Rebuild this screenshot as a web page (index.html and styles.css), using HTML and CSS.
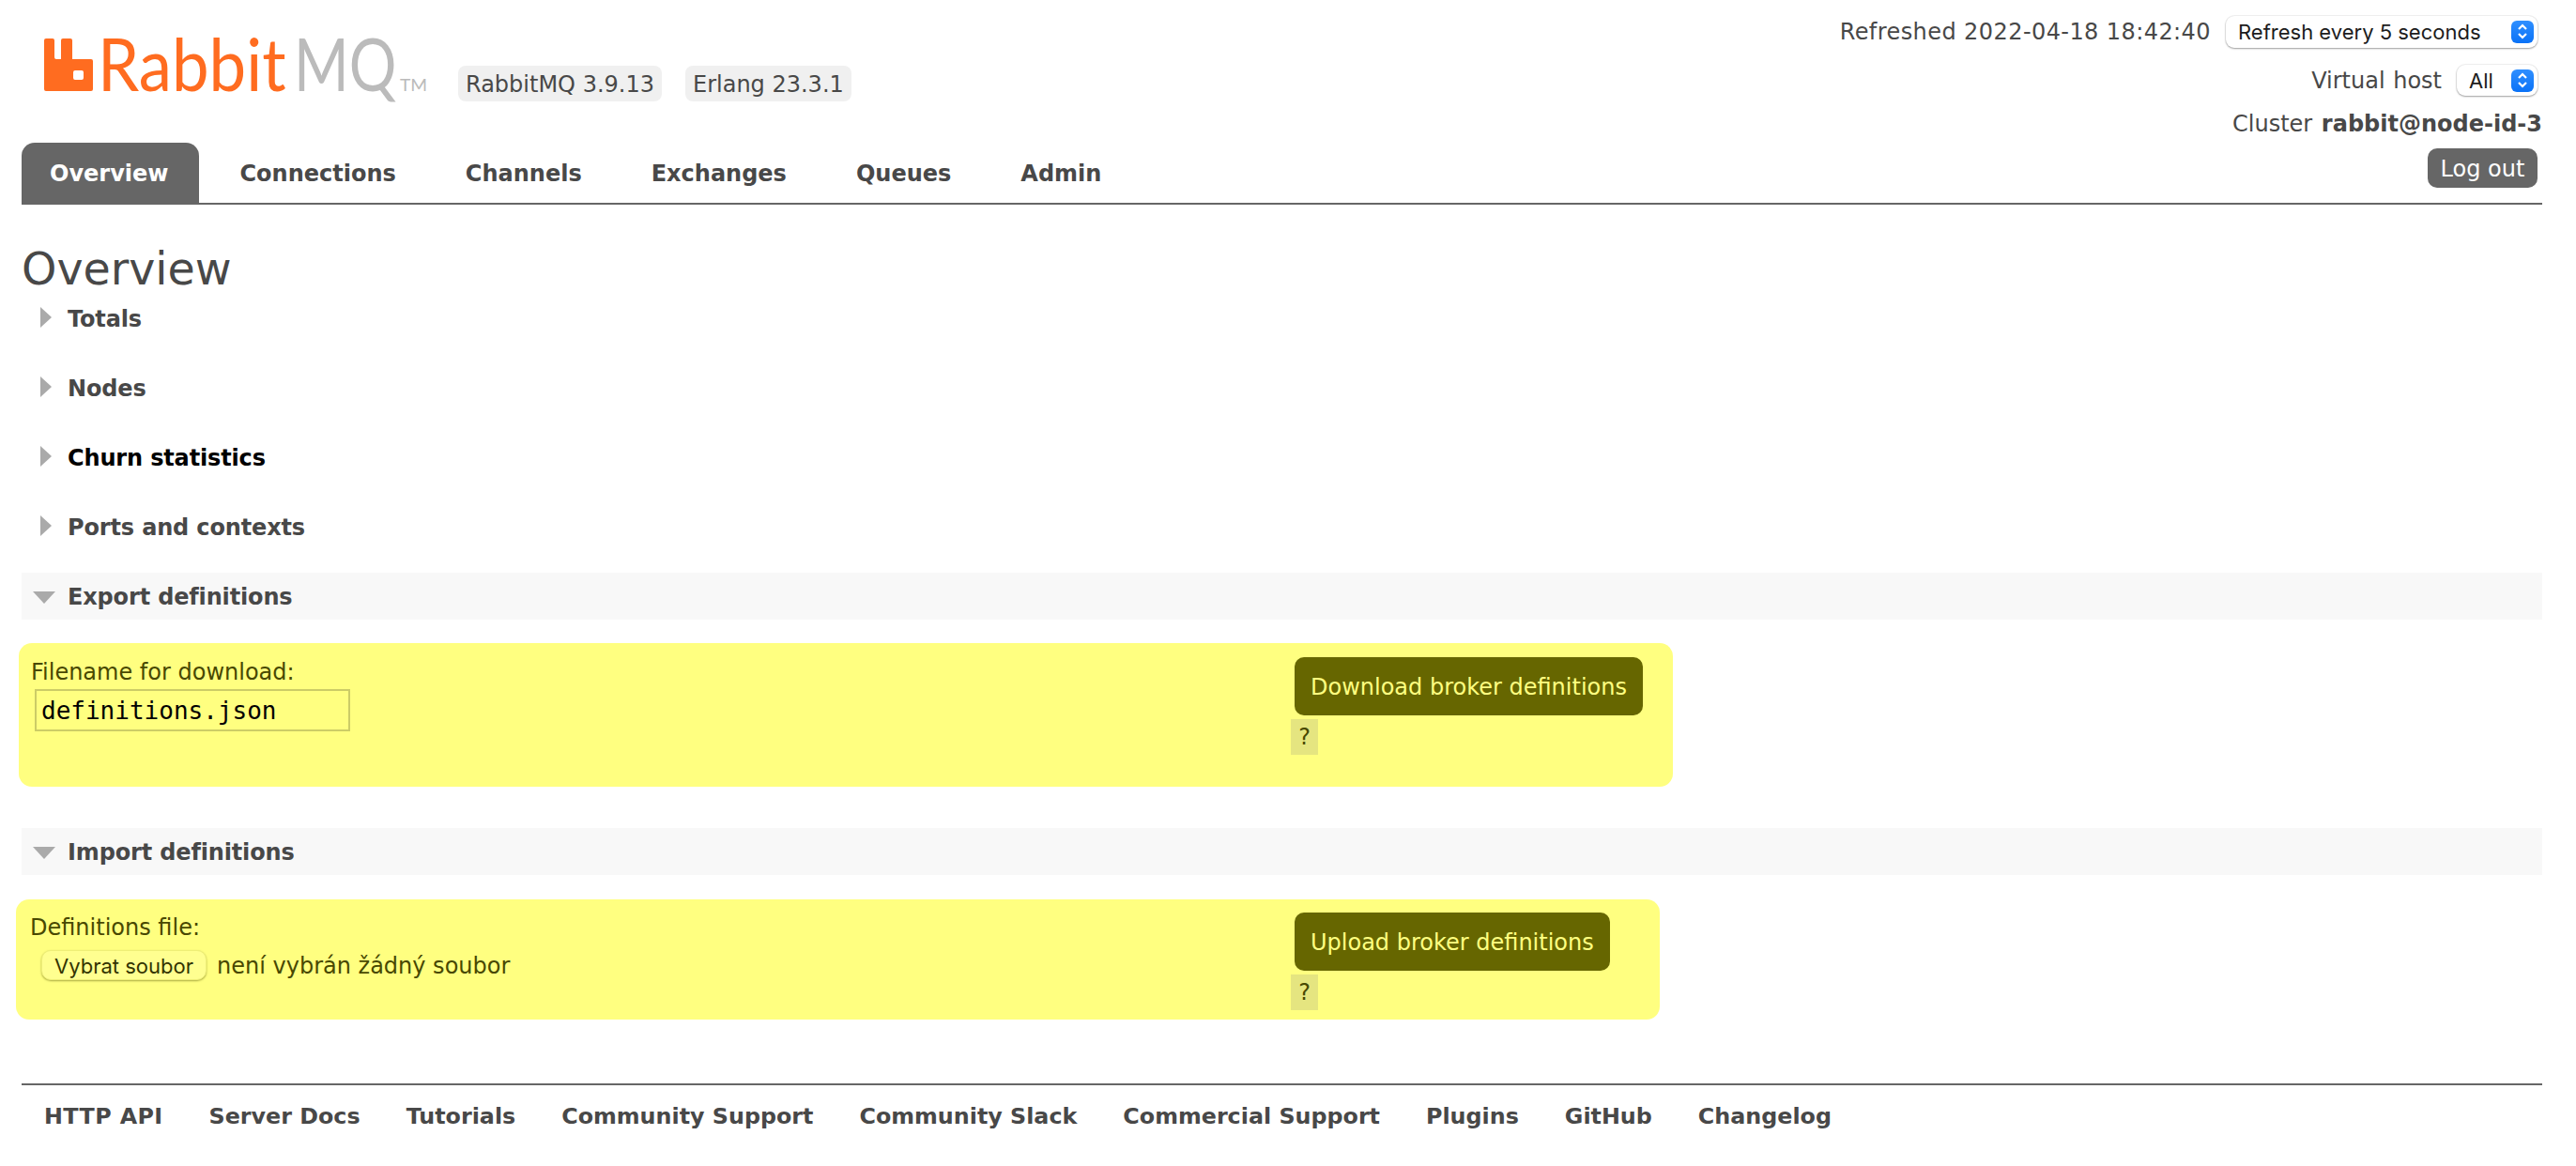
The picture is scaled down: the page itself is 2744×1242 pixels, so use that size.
FILE: index.html
```html
<!DOCTYPE html>
<html lang="en">
<head>
<meta charset="utf-8">
<title>RabbitMQ Management</title>
<link rel="stylesheet" href="styles.css">
</head>
<body>
<header class="header">
  <div class="brand-col">
    <div class="brand">
      <svg class="logo" width="410" height="110" viewBox="0 -30 410 110" aria-label="RabbitMQ">
        <path fill-rule="evenodd" fill="#ff6c20" d="M2 0H9a2 2 0 0 1 2 2V20a2 2 0 0 0 2 2H18V2a2 2 0 0 1 2-2H28a2 2 0 0 1 2 2V22H50a2 2 0 0 1 2 2V54a2 2 0 0 1-2 2H2a2 2 0 0 1-2-2V2a2 2 0 0 1 2-2ZM33 34a2 2 0 0 0-2 2v6a2 2 0 0 0 2 2h7a2 2 0 0 0 2-2v-6a2 2 0 0 0-2-2Z"/>
        <text class="logo-rabbit" transform="translate(57 55.5) scale(.907 1)">Rabbit</text>
        <text class="logo-mq" transform="translate(266 55.5) scale(.81 1)">MQ</text>
        <text class="logo-tm" transform="translate(379 56) scale(1.13 1)">TM</text>
      </svg>
      <span class="badge badge-rabbit">RabbitMQ 3.9.13</span>
      <span class="badge">Erlang 23.3.1</span>
    </div>
    <nav class="tabs">
      <a class="tab tab-active">Overview</a>
      <a class="tab">Connections</a>
      <a class="tab">Channels</a>
      <a class="tab">Exchanges</a>
      <a class="tab">Queues</a>
      <a class="tab">Admin</a>
    </nav>
  </div>
  <div class="status">
    <div class="status-row status-refresh">
      <span class="refreshed">Refreshed 2022-04-18 18:42:40</span>
      <div class="select select-wide">
        <span>Refresh every 5 seconds</span>
        <svg class="stepper" width="24" height="24" viewBox="0 0 24 24"><path d="M8 9l4-4 4 4M8 14l4 4 4-4" fill="none" stroke="#fff" stroke-width="2.2"/></svg>
      </div>
    </div>
    <div class="status-row status-vhost">
      <span class="vhost-label">Virtual host</span>
      <div class="select select-narrow">
        <span>All</span>
        <svg class="stepper" width="24" height="24" viewBox="0 0 24 24"><path d="M8 9l4-4 4 4M8 14l4 4 4-4" fill="none" stroke="#fff" stroke-width="2.2"/></svg>
      </div>
    </div>
    <div class="status-cluster">Cluster <b>rabbit@node-id-3</b></div>
    <button class="logout" type="button">Log out</button>
  </div>
</header>

<main class="main">
  <h1 class="title">Overview</h1>

  <h2 class="section"><svg class="arrow" width="24" height="24" viewBox="0 0 24 24"><path d="M8 1l12 11L8 23Z"/></svg>Totals</h2>
  <h2 class="section"><svg class="arrow" width="24" height="24" viewBox="0 0 24 24"><path d="M8 1l12 11L8 23Z"/></svg>Nodes</h2>
  <h2 class="section section-hover"><svg class="arrow" width="24" height="24" viewBox="0 0 24 24"><path d="M8 1l12 11L8 23Z"/></svg>Churn statistics</h2>
  <h2 class="section"><svg class="arrow" width="24" height="24" viewBox="0 0 24 24"><path d="M8 1l12 11L8 23Z"/></svg>Ports and contexts</h2>

  <h2 class="section section-open"><svg class="arrow" width="24" height="24" viewBox="0 0 24 24"><path d="M0 6h24L12 19Z"/></svg>Export definitions</h2>
  <form class="box box-export">
    <div class="field">
      <label class="field-label">Filename for download:</label>
      <input class="text-input" type="text" value="definitions.json">
    </div>
    <div class="actions">
      <button class="action" type="button">Download broker definitions</button>
      <span class="help">?</span>
    </div>
  </form>

  <h2 class="section section-open section-import"><svg class="arrow" width="24" height="24" viewBox="0 0 24 24"><path d="M0 6h24L12 19Z"/></svg>Import definitions</h2>
  <form class="box box-import">
    <div class="field">
      <label class="field-label">Definitions file:</label>
      <div class="file-row">
        <button class="file-button" type="button">Vybrat soubor</button>
        <span class="file-name">není vybrán žádný soubor</span>
      </div>
    </div>
    <div class="actions">
      <button class="action" type="button">Upload broker definitions</button>
      <span class="help">?</span>
    </div>
  </form>
</main>

<footer class="footer">
  <a class="footer-api">HTTP API</a>
  <a>Server Docs</a>
  <a>Tutorials</a>
  <a>Community Support</a>
  <a>Community Slack</a>
  <a>Commercial Support</a>
  <a>Plugins</a>
  <a>GitHub</a>
  <a>Changelog</a>
</footer>
</body>
</html>
```

FILE: styles.css
```css
* { box-sizing: border-box; }
html, body { margin: 0; padding: 0; background: #fff; }
body {
  width: 2744px;
  height: 1242px;
  overflow: hidden;
  padding: 0 36px 0 23px;
  font-family: "DejaVu Sans", Verdana, sans-serif;
  font-size: 24px;
  line-height: 30px;
  color: #484848;
}

.header {
  display: flex;
  justify-content: space-between;
  height: 218px;
  border-bottom: 2px solid #666;
}
.brand-col {
  display: flex;
  flex-direction: column;
}
.brand {
  display: flex;
  align-items: flex-start;
  height: 152px;
  padding: 11px 0 0 24px;
}
.logo { flex: none; }
.logo-rabbit, .logo-mq {
  font-family: "Lato", "Open Sans", sans-serif;
  font-weight: 400;
  font-size: 78px;
}
.logo-rabbit { fill: #ff6c20; }
.logo-mq { fill: #bbb; }
.logo-tm {
  font-family: "Lato", sans-serif;
  font-size: 17px;
  fill: #bbb;
}
.badge {
  height: 38px;
  margin: 59px 0 0 25px;
  padding: 5px 8px 3px;
  background: #f0f0f0;
  border-radius: 8px;
  white-space: nowrap;
}
.badge-rabbit { margin-left: 31px; }

.tabs {
  display: flex;
  align-items: stretch;
  height: 64px;
}
.tab {
  display: flex;
  align-items: center;
  padding: 2px 30px 0;
  margin-right: 14px;
  font-weight: 700;
  white-space: nowrap;
  color: #484848;
}
.tab-active {
  padding-right: 33px;
  margin-right: 13px;
  background: #666;
  color: #fff;
  border-radius: 14px 14px 0 0;
}

.status {
  display: flex;
  flex-direction: column;
  align-items: flex-end;
  padding-top: 17px;
}
.status-row {
  display: flex;
  align-items: center;
  justify-content: flex-end;
  padding-right: 5px;
  white-space: nowrap;
}
.status-refresh { gap: 16px; height: 34px; }
.status-vhost { gap: 16px; height: 33px; margin-top: 18px; }
.refreshed { letter-spacing: .42px; }
.vhost-label { word-spacing: 1px; }
.status-cluster {
  height: 30px;
  margin-top: 15px;
  white-space: nowrap;
  word-spacing: 2px;
}
.select {
  display: flex;
  align-items: center;
  justify-content: space-between;
  height: 34px;
  padding: 0 4px 0 13px;
  background: #fff;
  border-radius: 9px;
  box-shadow: 0 1px 2px rgba(0, 0, 0, .35), 0 0 0 1px rgba(0, 0, 0, .05);
  font-family: "Inter", sans-serif;
  font-size: 22px;
  color: #1c1c1c;
}
.select-wide { width: 332px; }
.select-narrow { width: 86px; height: 33px; }
.stepper {
  flex: none;
  border-radius: 6px;
  background: linear-gradient(#2f8fff, #0a72f7);
}
.logout {
  width: 117px;
  height: 42px;
  margin: 11px 5px 0 0;
  padding: 1px 0 0;
  border: 0;
  border-radius: 10px;
  background: #666;
  color: #fff;
  font: inherit;
}

.title {
  margin: 0;
  padding-top: 42px;
  font-size: 47.5px;
  font-weight: 400;
  line-height: 54px;
}
.section {
  display: flex;
  align-items: center;
  height: 50px;
  margin: 0 0 24px;
  padding: 2px 0 0 12px;
  font-size: 24px;
  font-weight: 700;
  line-height: 30px;
  letter-spacing: -.15px;
}
.section-hover { color: #000; }
.section-open { background: #f8f8f8; margin-bottom: 25px; }
.section-import { margin-bottom: 26px; }
.arrow {
  flex: none;
  width: 24px;
  margin: 0 13px 4px 0;
  fill: #aaa;
}
.section-open .arrow { margin-bottom: 0; }

.box {
  display: grid;
  align-items: start;
  background: #ffff80;
  border-radius: 14px;
  color: #484800;
}
.box-export {
  grid-template-columns: 1355px auto;
  width: 1762px;
  margin: 0 0 44px -3px;
  padding: 15px 0 34px;
}
.box-import {
  grid-template-columns: 1358px auto;
  width: 1751px;
  margin: 0 0 68px -6px;
  padding: 14px 0 10px;
}
.field { padding-left: 13px; }
.box-import .field { padding-left: 15px; }
.field-label { display: block; padding-top: 1px; }
.text-input {
  display: block;
  width: 336px;
  height: 45px;
  margin: 3px 0 0 4px;
  padding: 0 5px;
  border: 2px solid #cccc66;
  background: #ffff80;
  font-family: "DejaVu Sans Mono", monospace;
  font-size: 26px;
  color: #000;
  outline: none;
}
.file-row {
  display: flex;
  align-items: center;
  gap: 11px;
  margin: 9px 0 0 12px;
}
.file-name { padding-top: 2px; }
.file-button {
  width: 176px;
  height: 32px;
  padding: 1px 0 0;
  border: 1px solid #eeee77;
  border-radius: 10px;
  background: #ffff90;
  box-shadow: 0 1px 2px rgba(90, 90, 0, .5);
  font-family: "Inter", sans-serif;
  font-size: 22px;
  color: #333300;
}
.actions {
  display: flex;
  flex-direction: column;
  align-items: flex-start;
}
.action {
  height: 62px;
  margin-left: 4px;
  padding: 2px 17px 0;
  border: 0;
  border-radius: 10px;
  background: #666600;
  color: #ffff80;
  font: inherit;
  white-space: nowrap;
}
.help {
  width: 29px;
  height: 38px;
  margin-top: 4px;
  background: #e5e580;
  text-align: center;
  line-height: 38px;
}

.footer {
  display: flex;
  gap: 49px;
  padding: 18px 0 0 24px;
  border-top: 2px solid #666;
  font-size: 23.8px;
  font-weight: 700;
  white-space: nowrap;
}
.footer-api { letter-spacing: .4px; }
```
